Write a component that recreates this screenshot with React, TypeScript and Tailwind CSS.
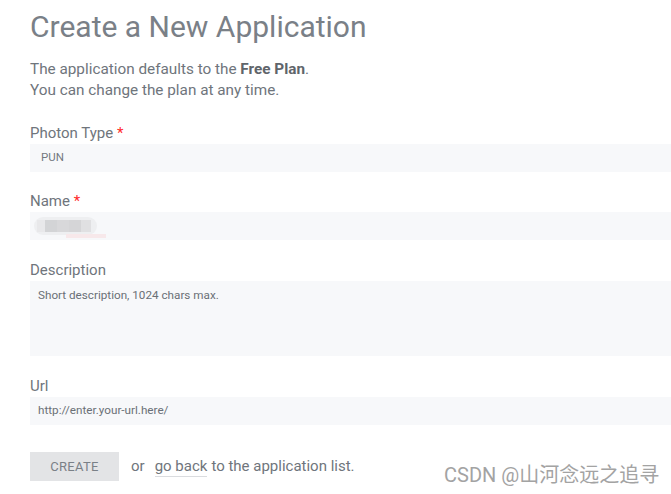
import React from "react";

function Label({ text, req }: { text: string; req?: boolean }) {
  return (
    <div className="text-[15px] leading-[20px] text-[#6f757c] mb-[1px]">
      {text}
      {req && <span className="text-[#ff2a2a]"> *</span>}
    </div>
  );
}

export default function App() {
  return (
    <div
      className="w-[671px] h-[494px] bg-white overflow-hidden relative"
      style={{ fontFamily: "Roboto, 'Noto Sans CJK SC', sans-serif" }}
    >
      <div className="pl-[30px] pt-[9px]">
        <h1 className="text-[30px] leading-[36px] text-[#7a8087] font-normal">
          Create a New Application
        </h1>
        <div className="mt-[14px] text-[15.3px] leading-[21px] text-[#6f757c]">
          <div>
            The application defaults to the <b className="font-bold text-[#5f656b]">Free Plan</b>.
          </div>
          <div>You can change the plan at any time.</div>
        </div>

        <div className="mt-[22px]">
          <Label text="Photon Type" req />
          <div className="h-[28px] bg-[#f7f8fa] flex items-center pl-[11px] text-[11.5px] text-[#73797f]">
            PUN
          </div>
        </div>

        <div className="mt-[19px]">
          <Label text="Name" req />
          <div className="h-[28px] bg-[#f7f8fa] flex items-center relative">
            <div className="ml-[4px] flex items-center h-[18px] rounded-full bg-[#eeeff1] pr-[6px]">
              <div className="w-[8px] h-[12px] bg-[#e8e8ea] ml-[3px]" />
              <div className="w-[12px] h-[12px] bg-[#d3d4d6]" />
              <div className="w-[12px] h-[12px] bg-[#d8d8da]" />
              <div className="w-[12px] h-[12px] bg-[#d5d5d7]" />
              <div className="w-[10px] h-[12px] bg-[#e0e0e2]" />
            </div>
            <div className="absolute left-[36px] top-[22px] w-[40px] h-[4px] bg-[#f7e8ea]" />
          </div>
        </div>

        <div className="mt-[20px]">
          <Label text="Description" />
          <div className="h-[75px] bg-[#f7f8fa] pl-[8px] pt-[7px] text-[11.7px] leading-[14px] text-[#6a7076]">
            Short description, 1024 chars max.
          </div>
        </div>

        <div className="mt-[20px]">
          <Label text="Url" />
          <div className="h-[28px] bg-[#f7f8fa] flex items-center pl-[8px] text-[11.7px] text-[#6a7076]">
            http://enter.your-url.here/
          </div>
        </div>

        <div className="mt-[27px] flex items-center text-[15px] text-[#6f757c]">
          <div className="w-[89px] h-[29px] bg-[#e3e4e6] flex items-center justify-center text-[13px] text-[#7a8087] tracking-[0.3px]">
            CREATE
          </div>
          <span className="ml-[12px]">or</span>
          <span className="ml-[10px] border-b border-[#dadcdf] leading-[19px]">go back</span>
          <span className="ml-[4px]">to the application list.</span>
        </div>
      </div>
      <div className="absolute left-[444px] top-[462px] text-[20px] leading-[26px] text-[#a3a3a3]">
        CSDN @山河念远之追寻
      </div>
    </div>
  );
}
